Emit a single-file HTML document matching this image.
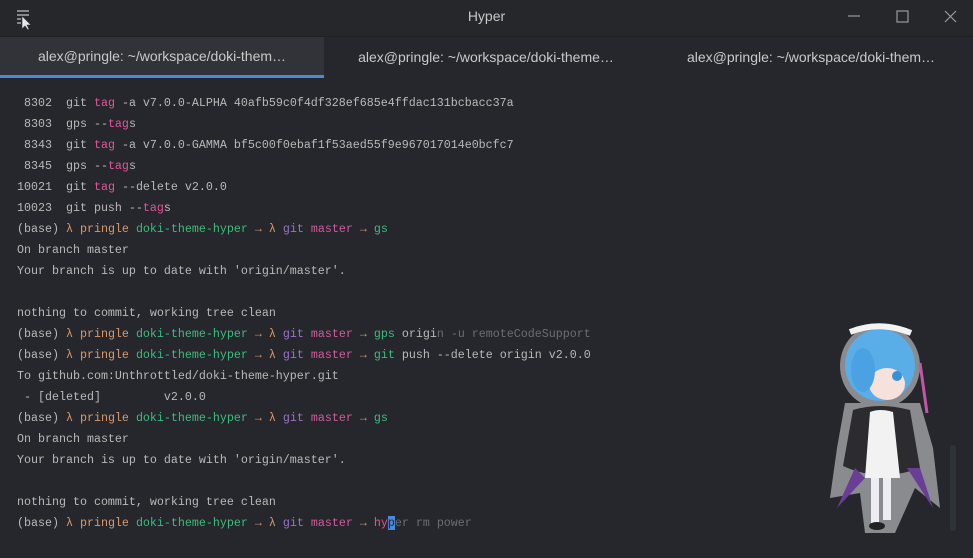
<!DOCTYPE html>
<html><head><meta charset="utf-8"><style>
*{margin:0;padding:0;box-sizing:border-box}
body{width:973px;height:558px;background:#26272c;overflow:hidden;position:relative;font-family:"Liberation Sans",sans-serif}
.title{position:absolute;left:0;top:0;width:973px;height:37px;background:#26272b;border-bottom:1px solid #202124}
.title .t{position:absolute;left:0;width:973px;top:8px;text-align:center;color:#c8c8c8;font-size:14px}
.tabs{position:absolute;top:37px;left:0;width:973px;height:41px;background:#26272c}
.tab{position:absolute;top:0;height:41px;width:324px;text-align:center;line-height:40px;color:#c9c9c9;font-size:14px}
.tab.a{background:#323338;border-bottom:3px solid #4a8ad6;height:41px;line-height:38px}
.term{position:absolute;left:17px;top:93px;font-family:"Liberation Mono",monospace;font-size:11.67px;line-height:21px;color:#b9b9b9;white-space:pre}
.p{color:#e0559a}.o{color:#d9986a}.g{color:#3dbb7d}.v{color:#9a72c6}.m{color:#cf5c9c}.d{color:#6c6d70}
.cur{background:#4a8ad6;color:#26272c}
</style></head><body>
<div class="title">
<svg style="position:absolute;left:16px;top:9px" width="20" height="22"><g stroke="#bbb" stroke-width="1.3"><line x1="1" y1="2" x2="13" y2="2"/><line x1="1" y1="6" x2="13" y2="6"/><line x1="1" y1="10" x2="5" y2="10"/><line x1="1" y1="14" x2="5" y2="14"/></g><path d="M6 7 L6 20 L9 17 L12 21 L13 20 L11 16 L15 16 Z" fill="#e8e8e8" stroke="#333" stroke-width=".6"/></svg>
<div class="t">Hyper</div>
<svg style="position:absolute;left:840px;top:8px" width="125" height="20"><g stroke="#9a9a9a" stroke-width="1.2" fill="none"><line x1="8" y1="8" x2="20" y2="8"/><rect x="57" y="3" width="11" height="11"/><line x1="105" y1="3" x2="116" y2="14"/><line x1="116" y1="3" x2="105" y2="14"/></g></svg>
</div>
<div class="tabs">
<div class="tab a" style="left:0">alex@pringle: ~/workspace/doki-them…</div>
<div class="tab" style="left:324px">alex@pringle: ~/workspace/doki-theme…</div>
<div class="tab" style="left:649px">alex@pringle: ~/workspace/doki-them…</div>
</div>
<div class="term"> 8302  git <span class="p">tag</span> -a v7.0.0-ALPHA 40afb59c0f4df328ef685e4ffdac131bcbacc37a
 8303  gps --<span class="p">tag</span>s
 8343  git <span class="p">tag</span> -a v7.0.0-GAMMA bf5c00f0ebaf1f53aed55f9e967017014e0bcfc7
 8345  gps --<span class="p">tag</span>s
10021  git <span class="p">tag</span> --delete v2.0.0
10023  git push --<span class="p">tag</span>s
(base) <span class="o">λ pringle</span> <span class="g">doki-theme-hyper</span> <span class="o">→</span> <span class="o">λ</span> <span class="v">git</span> <span class="m">master</span> <span class="o">→</span> <span class="g">gs</span>
On branch master
Your branch is up to date with 'origin/master'.

nothing to commit, working tree clean
(base) <span class="o">λ pringle</span> <span class="g">doki-theme-hyper</span> <span class="o">→</span> <span class="o">λ</span> <span class="v">git</span> <span class="m">master</span> <span class="o">→</span> <span class="g">gps</span> origi<span class="d">n -u remoteCodeSupport</span>
(base) <span class="o">λ pringle</span> <span class="g">doki-theme-hyper</span> <span class="o">→</span> <span class="o">λ</span> <span class="v">git</span> <span class="m">master</span> <span class="o">→</span> <span class="g">git</span> push --delete origin v2.0.0
To github.com:Unthrottled/doki-theme-hyper.git
 - [deleted]         v2.0.0
(base) <span class="o">λ pringle</span> <span class="g">doki-theme-hyper</span> <span class="o">→</span> <span class="o">λ</span> <span class="v">git</span> <span class="m">master</span> <span class="o">→</span> <span class="g">gs</span>
On branch master
Your branch is up to date with 'origin/master'.

nothing to commit, working tree clean
(base) <span class="o">λ pringle</span> <span class="g">doki-theme-hyper</span> <span class="o">→</span> <span class="o">λ</span> <span class="v">git</span> <span class="m">master</span> <span class="o">→</span> <span class="p">hy</span><span class="cur">p</span><span class="d">er rm power</span></div>
<div style="position:absolute;left:950px;top:445px;width:6px;height:86px;background:#2e3436;border-radius:3px"></div>
<svg style="position:absolute;left:825px;top:318px" width="125" height="222">
<g fill="#8a8b8f">
<ellipse cx="55" cy="48" rx="40" ry="42"/>
<path d="M20 85 L95 85 L108 130 L115 190 L90 170 L70 215 L40 215 L35 175 L5 180 L12 130 Z"/>
</g>
<ellipse cx="55" cy="47" rx="35" ry="36" fill="#5aaee8"/>
<ellipse cx="62" cy="66" rx="18" ry="16" fill="#f6e1dc"/>
<ellipse cx="38" cy="52" rx="12" ry="22" fill="#4aa2e2"/>
<circle cx="72" cy="58" r="5" fill="#3b8fd6"/>
<path d="M25 14 Q55 2 86 15" stroke="#f3f3f3" stroke-width="6" fill="none"/>
<path d="M95 45 L102 95" stroke="#c256a8" stroke-width="3"/>
<path d="M28 92 Q55 84 85 92 L95 150 Q55 165 18 148 Z" fill="#2c2c30"/>
<path d="M45 94 Q55 90 68 94 L75 160 L40 160 Z" fill="#f2f2f2"/>
<path d="M30 150 L12 190 L40 160 Z M82 150 L108 190 L95 150 Z" fill="#6a3d96"/>
<rect x="46" y="160" width="8" height="45" fill="#eeeef2"/>
<rect x="58" y="160" width="8" height="42" fill="#eeeef2"/>
<ellipse cx="52" cy="208" rx="8" ry="4" fill="#222"/>
</svg>
</body></html>
